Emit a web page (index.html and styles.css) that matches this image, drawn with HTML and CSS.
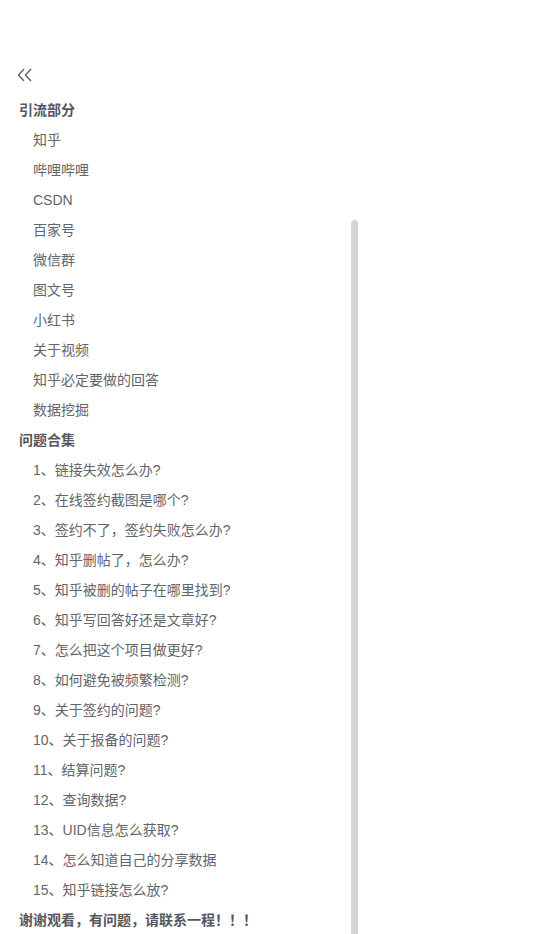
FILE: index.html
```html
<!DOCTYPE html>
<html lang="zh-CN">
<head>
  <meta charset="UTF-8" />
  <title>目录</title>
  <link rel="stylesheet" href="styles.css">
</head>
<body>
  <aside class="sidebar">
    <button class="collapse" title="收起">
      <svg width="16" height="14" viewBox="0 0 16 14">
        <polyline points="7,1 1.5,7 7,13" />
        <polyline points="14,1 8.5,7 14,13" />
      </svg>
    </button>

    <div class="toc">
      <div class="toc-title">引流部分</div>
      <ul>
        <li>知乎</li>
        <li>哔哩哔哩</li>
        <li>CSDN</li>
        <li>百家号</li>
        <li>微信群</li>
        <li>图文号</li>
        <li>小红书</li>
        <li>关于视频</li>
        <li>知乎必定要做的回答</li>
        <li>数据挖掘</li>
      </ul>

      <div class="toc-title">问题合集</div>
      <ul>
        <li>1、链接失效怎么办?</li>
        <li>2、在线签约截图是哪个?</li>
        <li>3、签约不了，签约失败怎么办?</li>
        <li>4、知乎删帖了，怎么办?</li>
        <li>5、知乎被删的帖子在哪里找到?</li>
        <li>6、知乎写回答好还是文章好?</li>
        <li>7、怎么把这个项目做更好?</li>
        <li>8、如何避免被频繁检测?</li>
        <li>9、关于签约的问题?</li>
        <li>10、关于报备的问题?</li>
        <li>11、结算问题?</li>
        <li>12、查询数据?</li>
        <li>13、UID信息怎么获取?</li>
        <li>14、怎么知道自己的分享数据</li>
        <li>15、知乎链接怎么放?</li>
      </ul>

      <div class="toc-title">谢谢观看，有问题，请联系一程！！！</div>
    </div>

    <div class="scroll-thumb"></div>
  </aside>
</body>
</html>
```

FILE: styles.css
```css
html, body { margin: 0; padding: 0; background: #fff; }
body {
  font-family: "Liberation Sans", Arial, "Noto Sans CJK SC", sans-serif;
  font-size: 14px;
  color: #606266;
  overflow: hidden;
}

.sidebar {
  position: relative;
  width: 360px;
  height: 934px;
  padding-top: 68px;
  box-sizing: border-box;
}

.collapse {
  display: block;
  margin-left: 17px;
  padding: 0;
  border: 0;
  background: none;
  cursor: pointer;
}
.collapse svg { display: block; }
.collapse svg polyline {
  fill: none;
  stroke: #5f6368;
  stroke-width: 1.4;
}

.toc { margin-top: 13px; }
.toc-title {
  padding-left: 19px;
  line-height: 30px;
  font-weight: bold;
  color: #54575d;
}
.toc ul { list-style: none; margin: 0; padding: 0; }
.toc li {
  padding-left: 33px;
  line-height: 30px;
  color: #62656b;
}

.scroll-thumb {
  position: absolute;
  left: 351px;
  top: 220px;
  bottom: 0;
  width: 7px;
  border-radius: 4px 4px 0 0;
  background: #d3d3d8;
}
```
